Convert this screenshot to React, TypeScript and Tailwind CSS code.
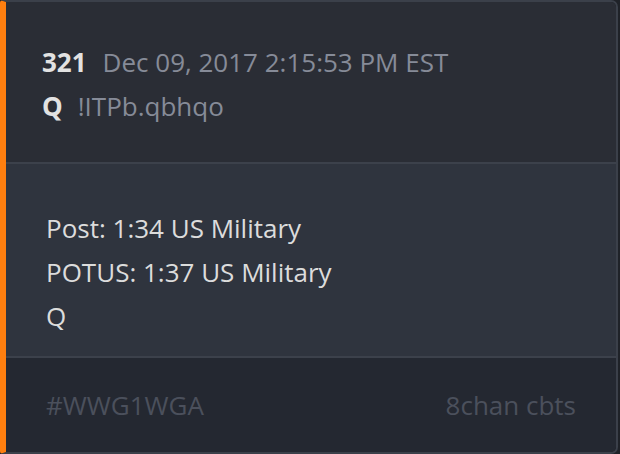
export default function App() {
  return (
    <div className="w-[620px] h-[454px] bg-[#1f2228]" style={{ fontFamily: '"Open Sans", sans-serif' }}>
      <div className="w-[618px] h-[454px] flex flex-col overflow-hidden rounded-r-[7px] rounded-l-[3px] border-2 border-l-[6px] border-[#3b404a] border-l-[#ff7f0f] text-[26px]">
        {/* Header */}
        <div className="bg-[#2a2d35] pt-[38px] pb-[34px] pl-[36px] leading-[44px] border-b-2 border-[#3c414b]">
          <div className="flex items-baseline">
            <span className="font-bold text-[#e2e2e2]">321</span>
            <span className="ml-[16px] text-[#868b98]">Dec 09, 2017 2:15:53 PM EST</span>
          </div>
          <div className="flex items-baseline">
            <span className="font-bold text-[#e2e2e2]">Q</span>
            <span className="ml-[15px] text-[#868b98]">!ITPb.qbhqo</span>
          </div>
        </div>

        {/* Body */}
        <div className="bg-[#2f343e] pt-[42px] pb-[18px] pl-[40px] leading-[44px] text-[#dcdcdc] border-b-2 border-[#3c414b]">
          <p>Post: 1:34 US Military</p>
          <p>POTUS: 1:37 US Military</p>
          <p>Q</p>
        </div>

        {/* Footer */}
        <div className="flex-1 bg-[#242831] flex items-start justify-between pt-[25px] pl-[40px] pr-[40px] leading-[44px] text-[#4b505c]">
          <span>#WWG1WGA</span>
          <span>8chan cbts</span>
        </div>
      </div>
    </div>
  );
}
